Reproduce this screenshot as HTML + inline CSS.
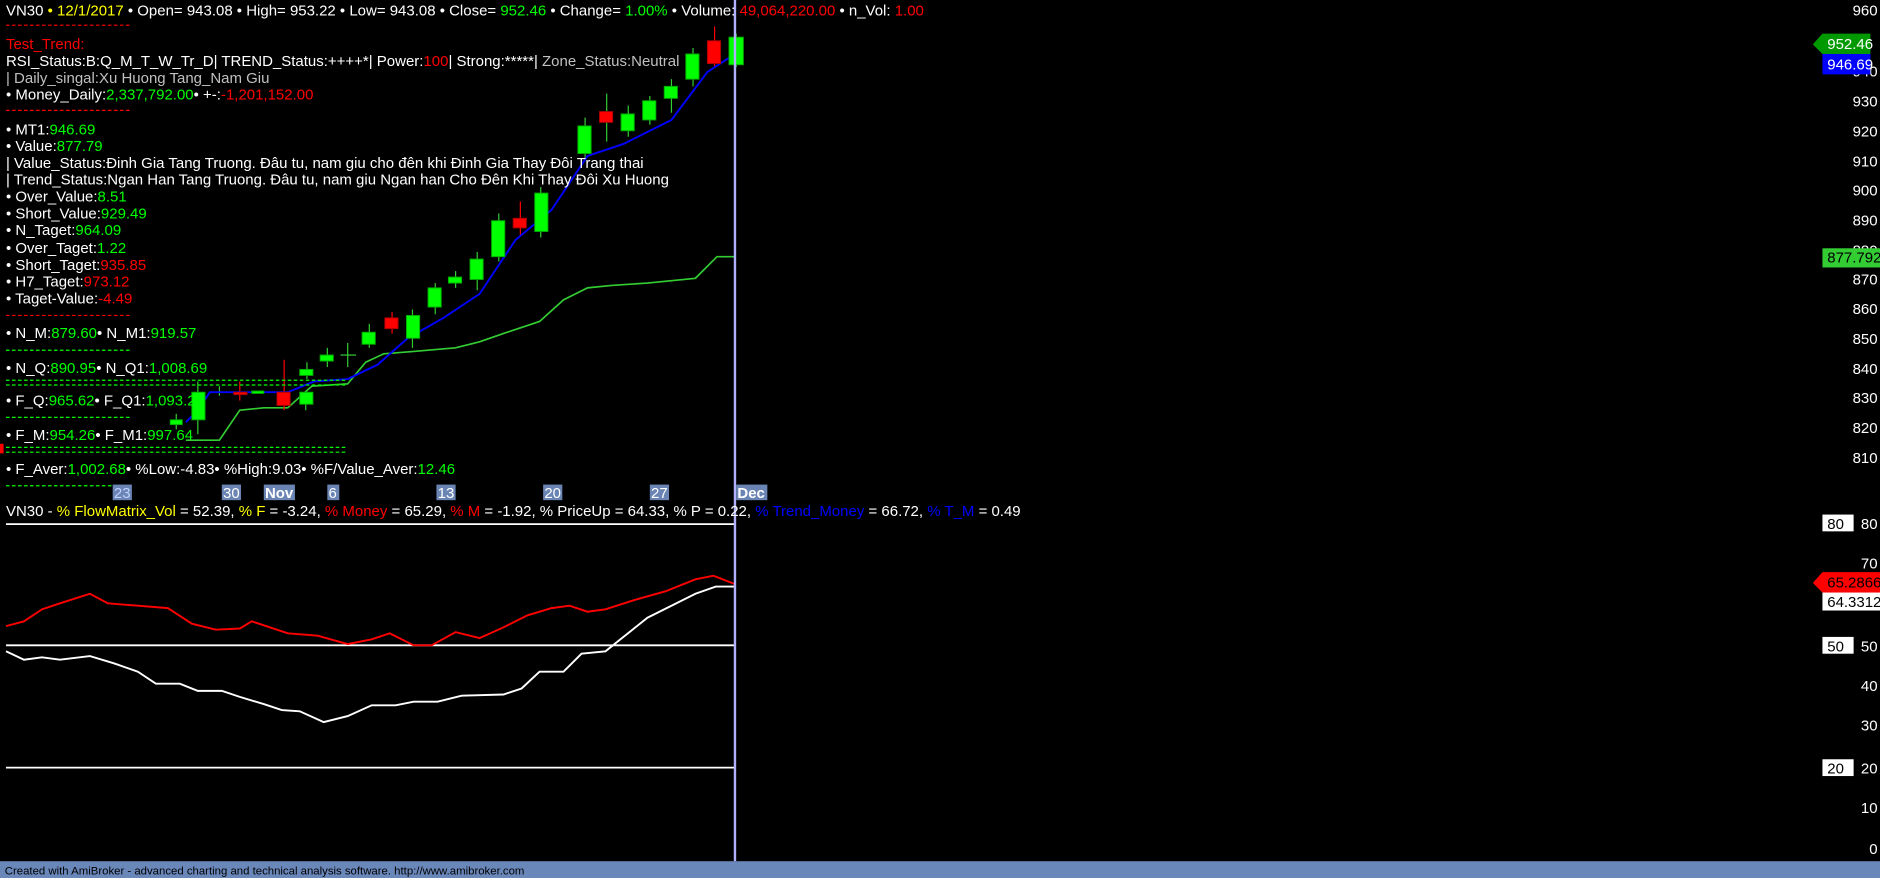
<!DOCTYPE html>
<html><head><meta charset="utf-8"><style>
html,body{margin:0;padding:0;background:#000;width:1880px;height:878px;overflow:hidden}
svg{display:block}
text{font-family:"Liberation Sans",Arial,sans-serif;font-size:12.5px;fill:#fff}
.g{fill:#00ff00}.r{fill:#ff0000}.y{fill:#ffff00}.b{fill:#0000ff}.gr{fill:#c0c0c0}.k{fill:#000}.lb{fill:#c0d0ff}
</style></head><body>
<svg width="1880" height="878" viewBox="0 0 1568 732" preserveAspectRatio="none">
<rect width="1568" height="732" fill="#000"/>
<line x1="5" y1="437" x2="613" y2="437" stroke="#fff" stroke-width="1.5"/>
<line x1="5" y1="538" x2="613" y2="538" stroke="#fff" stroke-width="1.5"/>
<line x1="5" y1="640" x2="613" y2="640" stroke="#fff" stroke-width="1.5"/>
<polyline fill="none" stroke="#ff0000" stroke-width="1.6" points="5,522 20,518 35,508 50,503 75,495 90,503 115,505 140,507 160,520 180,525 200,524 210,518 240,528 265,530 290,537 310,533 325,528 345,538 360,538 380,527 400,532 420,523 440,513 460,507 475,505 490,510 505,508 530,500 555,493 580,483 595,480 613,487"/>
<polyline fill="none" stroke="#fff" stroke-width="1.6" points="5,543 20,550 35,548 50,550 75,547 95,553 115,560 130,570 150,570 165,576 185,576 200,581 220,587 235,592 250,593 270,602 290,597 310,588 330,588 345,585 365,585 385,580 420,579 435,574 450,560 470,560 485,545 505,543 520,531 540,515 560,505 580,495 597,489 613,489"/>
<polyline fill="none" stroke="#33cc33" stroke-width="1.4" points="155,367 183,367 200,342 220,340 240,340 260,322 290,320 305,302 320,295 345,293 380,290 400,285 420,278 450,268 470,250 490,240 510,238 540,236 580,232 598,214 613,214"/>
<g stroke="#33cc33" stroke-width="1">
<line x1="147" y1="345" x2="147" y2="358"/><line x1="165" y1="318" x2="165" y2="362"/>
<line x1="183" y1="322" x2="183" y2="330"/><line x1="255" y1="326" x2="255" y2="342"/>
<line x1="256" y1="302" x2="256" y2="316"/><line x1="273" y1="290" x2="273" y2="306"/>
<line x1="290" y1="286" x2="290" y2="306"/><line x1="284" y1="296" x2="297" y2="296"/>
<line x1="308" y1="270" x2="308" y2="290"/><line x1="344" y1="258" x2="344" y2="290"/>
<line x1="363" y1="236" x2="363" y2="262"/><line x1="380" y1="226" x2="380" y2="240"/>
<line x1="398" y1="210" x2="398" y2="242"/><line x1="416" y1="178" x2="416" y2="218"/>
<line x1="451" y1="156" x2="451" y2="198"/><line x1="488" y1="98" x2="488" y2="132"/>
<line x1="506" y1="78" x2="506" y2="118"/><line x1="524" y1="88" x2="524" y2="114"/>
<line x1="542" y1="80" x2="542" y2="104"/><line x1="560" y1="66" x2="560" y2="94"/>
<line x1="578" y1="40" x2="578" y2="72"/><line x1="614" y1="28" x2="614" y2="56"/>
</g>
<g stroke="#ff0000" stroke-width="1">
<line x1="200" y1="318" x2="200" y2="334"/><line x1="237" y1="300" x2="237" y2="342"/>
<line x1="327" y1="260" x2="327" y2="278"/><line x1="434" y1="168" x2="434" y2="196"/>
<line x1="596" y1="22" x2="596" y2="56"/>
</g>
<polyline fill="none" stroke="#0000ff" stroke-width="1.6" points="155,352 165,342 175,327 240,327 262,318 290,316 315,304 340,282 370,265 400,245 430,200 460,175 490,130 520,120 560,100 590,60 613,45"/>
<g fill="#00ff00" stroke="#00aa00" stroke-width="0.8">
<rect x="142" y="350" width="10" height="4"/><rect x="160" y="327" width="11" height="23"/>
<rect x="210" y="326" width="10" height="2"/><rect x="250" y="327" width="11" height="10"/>
<rect x="250" y="308" width="11" height="5"/><rect x="267" y="296" width="11" height="5"/>
<rect x="302" y="277" width="11" height="10"/><rect x="339" y="263" width="11" height="19"/>
<rect x="357" y="240" width="11" height="16"/><rect x="374" y="231" width="11" height="5"/>
<rect x="392" y="216" width="11" height="17"/><rect x="410" y="184" width="11" height="30"/>
<rect x="446" y="161" width="11" height="32"/><rect x="482" y="105" width="11" height="23"/>
<rect x="518" y="95" width="11" height="14"/><rect x="536" y="84" width="11" height="16"/>
<rect x="554" y="72" width="11" height="10"/><rect x="572" y="45" width="11" height="21"/>
<rect x="608" y="31" width="12" height="23"/>
</g>
<g fill="#ff0000" stroke="#aa0000" stroke-width="0.8">
<rect x="195" y="327" width="11" height="2"/><rect x="231" y="327" width="11" height="11"/>
<rect x="321" y="265" width="11" height="9"/><rect x="428" y="182" width="11" height="8"/>
<rect x="500" y="93" width="11" height="9"/><rect x="590" y="34" width="11" height="19"/>
</g>
<line x1="613" y1="0" x2="613" y2="718" stroke="#b0b0ff" stroke-width="2"/>
<g stroke-dasharray="3,2" stroke-width="1">
<line x1="5" y1="21" x2="110" y2="21" stroke="#ff0000"/>
<line x1="5" y1="92" x2="110" y2="92" stroke="#ff0000"/>
<line x1="5" y1="263" x2="110" y2="263" stroke="#ff0000"/>
<line x1="5" y1="292" x2="110" y2="292" stroke="#00ff00"/>
<line x1="5" y1="317" x2="290" y2="317" stroke="#00ff00"/>
<line x1="5" y1="321" x2="290" y2="321" stroke="#00ff00"/>
<line x1="5" y1="348" x2="110" y2="348" stroke="#00ff00"/>
<line x1="5" y1="373" x2="290" y2="373" stroke="#00ff00"/>
<line x1="5" y1="377" x2="290" y2="377" stroke="#00ff00"/>
<line x1="5" y1="405" x2="110" y2="405" stroke="#00ff00"/>
</g>
<rect x="0" y="370" width="3" height="8" fill="#ff0000"/>
<text x="5" y="13">VN30 <tspan class="y">• 12/1/2017</tspan> • Open= 943.08 • High= 953.22 • Low= 943.08 • Close= <tspan class="g">952.46</tspan> • Change= <tspan class="g">1.00%</tspan> • Volume: <tspan class="r">49,064,220.00</tspan> • n_Vol: <tspan class="r">1.00</tspan></text>
<text x="5" y="41" class="r">Test_Trend:</text>
<text x="5" y="55">RSI_Status:B:Q_M_T_W_Tr_D| TREND_Status:++++*| Power:<tspan class="r">100</tspan>| Strong:*****| <tspan class="gr">Zone_Status:Neutral</tspan></text>
<text x="5" y="69" class="gr">| Daily_singal:Xu Huong Tang_Nam Giu</text>
<text x="5" y="83">• Money_Daily:<tspan class="g">2,337,792.00</tspan>• +-:<tspan class="r">-1,201,152.00</tspan></text>
<text x="5" y="112">• MT1:<tspan class="g">946.69</tspan></text>
<text x="5" y="126">• Value:<tspan class="g">877.79</tspan></text>
<text x="5" y="140">| Value_Status:Đinh Gia Tang Truong. Đâu tu, nam giu cho đên khi Đinh Gia Thay Đôi Trang thai</text>
<text x="5" y="154">| Trend_Status:Ngan Han Tang Truong. Đâu tu, nam giu Ngan han Cho Đên Khi Thay Đôi Xu Huong</text>
<text x="5" y="168">• Over_Value:<tspan class="g">8.51</tspan></text>
<text x="5" y="182">• Short_Value:<tspan class="g">929.49</tspan></text>
<text x="5" y="196">• N_Taget:<tspan class="g">964.09</tspan></text>
<text x="5" y="211">• Over_Taget:<tspan class="g">1.22</tspan></text>
<text x="5" y="225">• Short_Taget:<tspan class="r">935.85</tspan></text>
<text x="5" y="239">• H7_Taget:<tspan class="r">973.12</tspan></text>
<text x="5" y="253">• Taget-Value:<tspan class="r">-4.49</tspan></text>
<text x="5" y="282">• N_M:<tspan class="g">879.60</tspan>• N_M1:<tspan class="g">919.57</tspan></text>
<text x="5" y="311">• N_Q:<tspan class="g">890.95</tspan>• N_Q1:<tspan class="g">1,008.69</tspan></text>
<text x="5" y="338">• F_Q:<tspan class="g">965.62</tspan>• F_Q1:<tspan class="g">1,093.22</tspan></text>
<text x="5" y="367">• F_M:<tspan class="g">954.26</tspan>• F_M1:<tspan class="g">997.64</tspan></text>
<text x="5" y="395">• F_Aver:<tspan class="g">1,002.68</tspan>• %Low:-4.83• %High:9.03• %F/Value_Aver:<tspan class="g">12.46</tspan></text>
<g fill="#6a84b4">
<rect x="94" y="404" width="16" height="13"/><rect x="185" y="404" width="16" height="13"/>
<rect x="220" y="404" width="26" height="13"/><rect x="273" y="404" width="10" height="13"/>
<rect x="364" y="404" width="16" height="13"/><rect x="453" y="404" width="16" height="13"/>
<rect x="542" y="404" width="16" height="13"/><rect x="614" y="404" width="26" height="13"/>
</g>
<g style="font-size:12px">
<text x="95" y="415" class="lb">23</text><text x="186" y="415">30</text>
<text x="221" y="415" font-weight="bold">Nov</text><text x="274" y="415">6</text>
<text x="365" y="415">13</text><text x="454" y="415">20</text><text x="543" y="415">27</text>
<text x="615" y="415" font-weight="bold">Dec</text>
</g>
<text x="5" y="430">VN30 - <tspan class="y">% FlowMatrix_Vol</tspan> = 52.39, <tspan class="y">% F</tspan> = -3.24, <tspan class="r">% Money</tspan> = 65.29, <tspan class="r">% M</tspan> = -1.92, % PriceUp = 64.33, % P = 0.22, <tspan class="b">% Trend_Money</tspan> = 66.72, <tspan class="b">% T_M</tspan> = 0.49</text>
<g text-anchor="end">
<text x="1566" y="13">960</text><text x="1566" y="64">940</text><text x="1566" y="89">930</text>
<text x="1566" y="114">920</text><text x="1566" y="139">910</text><text x="1566" y="163">900</text>
<text x="1566" y="188">890</text><text x="1566" y="213">880</text><text x="1566" y="237">870</text>
<text x="1566" y="262">860</text><text x="1566" y="287">850</text><text x="1566" y="312">840</text>
<text x="1566" y="336">830</text><text x="1566" y="361">820</text><text x="1566" y="386">810</text>
</g>
<polygon points="1512,37 1520,28 1560,28 1560,45 1520,45" fill="#009900"/>
<text x="1524" y="41">952.46</text>
<rect x="1520" y="45" width="40" height="17" fill="#0000ff"/>
<text x="1524" y="58">946.69</text>
<rect x="1520" y="207" width="48" height="16" fill="#33cc33"/>
<text x="1524" y="219" class="k">877.792</text>
<g text-anchor="end">
<text x="1566" y="441">80</text><text x="1566" y="474">70</text><text x="1566" y="543">50</text>
<text x="1566" y="576">40</text><text x="1566" y="609">30</text><text x="1566" y="645">20</text>
<text x="1566" y="678">10</text><text x="1566" y="712">0</text>
</g>
<rect x="1520" y="429" width="26" height="14" fill="#fff"/><text x="1524" y="441" class="k">80</text>
<rect x="1520" y="531" width="26" height="14" fill="#fff"/><text x="1524" y="543" class="k">50</text>
<rect x="1520" y="633" width="26" height="14" fill="#fff"/><text x="1524" y="645" class="k">20</text>
<polygon points="1512,486 1520,477 1568,477 1568,494 1520,494" fill="#ff0000"/>
<text x="1524" y="490" class="k">65.2866</text>
<rect x="1520" y="494" width="48" height="15" fill="#fff"/>
<text x="1524" y="506" class="k">64.3312</text>
<rect x="0" y="718" width="1568" height="14" fill="#6a87ba"/>
<text x="4" y="729" style="font-size:9.5px" class="k">Created with AmiBroker - advanced charting and technical analysis software. http://www.amibroker.com</text>
</svg>
</body></html>
